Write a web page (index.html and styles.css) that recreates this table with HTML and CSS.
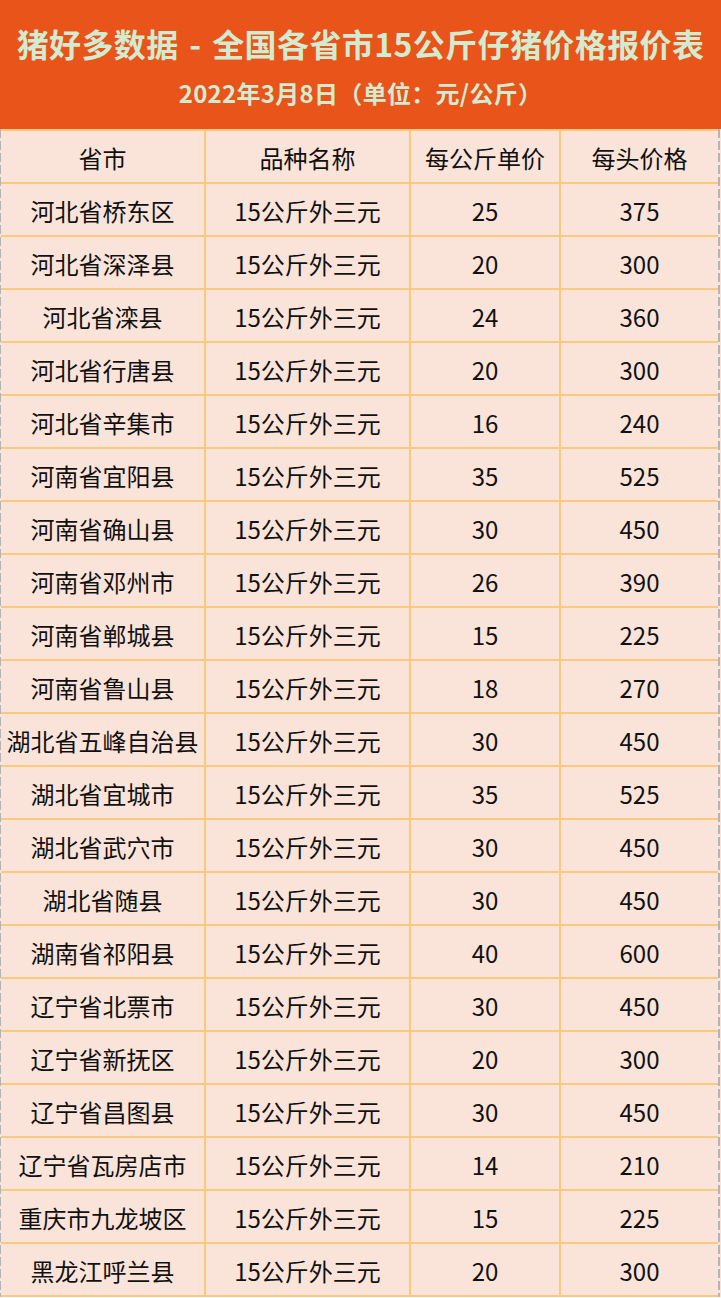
FILE: index.html
```html
<!DOCTYPE html>
<html lang="zh-CN">
<head>
<meta charset="utf-8">
<title>猪好多数据 - 全国各省市15公斤仔猪价格报价表</title>
<link rel="stylesheet" href="styles.css">
</head>
<body>
<div class="sheet">
  <header class="banner">
    <h1 class="title">猪好多数据 - 全国各省市15公斤仔猪价格报价表</h1>
    <p class="subtitle">2022年3月8日（单位：元/公斤）</p>
  </header>
  <div class="grid">
    <div class="cell">省市</div><div class="cell">品种名称</div><div class="cell">每公斤单价</div><div class="cell">每头价格</div>
    <div class="cell">河北省桥东区</div><div class="cell">15公斤外三元</div><div class="cell">25</div><div class="cell">375</div>
    <div class="cell">河北省深泽县</div><div class="cell">15公斤外三元</div><div class="cell">20</div><div class="cell">300</div>
    <div class="cell">河北省滦县</div><div class="cell">15公斤外三元</div><div class="cell">24</div><div class="cell">360</div>
    <div class="cell">河北省行唐县</div><div class="cell">15公斤外三元</div><div class="cell">20</div><div class="cell">300</div>
    <div class="cell">河北省辛集市</div><div class="cell">15公斤外三元</div><div class="cell">16</div><div class="cell">240</div>
    <div class="cell">河南省宜阳县</div><div class="cell">15公斤外三元</div><div class="cell">35</div><div class="cell">525</div>
    <div class="cell">河南省确山县</div><div class="cell">15公斤外三元</div><div class="cell">30</div><div class="cell">450</div>
    <div class="cell">河南省邓州市</div><div class="cell">15公斤外三元</div><div class="cell">26</div><div class="cell">390</div>
    <div class="cell">河南省郸城县</div><div class="cell">15公斤外三元</div><div class="cell">15</div><div class="cell">225</div>
    <div class="cell">河南省鲁山县</div><div class="cell">15公斤外三元</div><div class="cell">18</div><div class="cell">270</div>
    <div class="cell">湖北省五峰自治县</div><div class="cell">15公斤外三元</div><div class="cell">30</div><div class="cell">450</div>
    <div class="cell">湖北省宜城市</div><div class="cell">15公斤外三元</div><div class="cell">35</div><div class="cell">525</div>
    <div class="cell">湖北省武穴市</div><div class="cell">15公斤外三元</div><div class="cell">30</div><div class="cell">450</div>
    <div class="cell">湖北省随县</div><div class="cell">15公斤外三元</div><div class="cell">30</div><div class="cell">450</div>
    <div class="cell">湖南省祁阳县</div><div class="cell">15公斤外三元</div><div class="cell">40</div><div class="cell">600</div>
    <div class="cell">辽宁省北票市</div><div class="cell">15公斤外三元</div><div class="cell">30</div><div class="cell">450</div>
    <div class="cell">辽宁省新抚区</div><div class="cell">15公斤外三元</div><div class="cell">20</div><div class="cell">300</div>
    <div class="cell">辽宁省昌图县</div><div class="cell">15公斤外三元</div><div class="cell">30</div><div class="cell">450</div>
    <div class="cell">辽宁省瓦房店市</div><div class="cell">15公斤外三元</div><div class="cell">14</div><div class="cell">210</div>
    <div class="cell">重庆市九龙坡区</div><div class="cell">15公斤外三元</div><div class="cell">15</div><div class="cell">225</div>
    <div class="cell">黑龙江呼兰县</div><div class="cell">15公斤外三元</div><div class="cell">20</div><div class="cell">300</div>
  </div>
</div>
</body>
</html>
```
FILE: styles.css
```css
html, body {
  margin: 0;
  padding: 0;
  background: #ffffff;
}
body {
  font-family: "Noto Sans CJK SC", "Noto Sans", sans-serif;
}
.sheet {
  width: 721px;
}
.banner {
  height: 129px;
  background: #e8541a;
  display: flex;
  flex-direction: column;
  align-items: center;
  box-sizing: border-box;
  padding-top: 22px;
}
.title {
  margin: 0;
  font-size: 32px;
  line-height: 42px;
  font-weight: 700;
  letter-spacing: 0.4px;
  word-spacing: 3px;
  color: #d3ebd1;
  white-space: nowrap;
}
.subtitle {
  margin: 14px 0 0;
  font-size: 24px;
  line-height: 30px;
  font-weight: 700;
  letter-spacing: 0.3px;
  color: #d3ebd1;
  white-space: nowrap;
}
.grid {
  display: grid;
  grid-template-columns: 203px 203px 148px 157px;
  grid-auto-rows: 51px;
  gap: 2px;
  padding: 2px 3px 2px 1px;
  background:
    repeating-linear-gradient(to bottom, #b4b4b4 0 9px, #fae4d9 9px 12px) 0 0 / 1px 100% no-repeat,
    repeating-linear-gradient(to bottom, #b4b4b4 0 9px, #fae4d9 9px 12px) 718px 0 / 2px 100% no-repeat,
    linear-gradient(#fae4d9, #fae4d9) 720px 0 / 1px 100% no-repeat,
    #fac97d;
}
.cell {
  background: #fae4d9;
  display: flex;
  align-items: center;
  justify-content: center;
  font-size: 24px;
  color: #111111;
  padding-top: 1px;
  box-sizing: border-box;
  white-space: nowrap;
}
```
